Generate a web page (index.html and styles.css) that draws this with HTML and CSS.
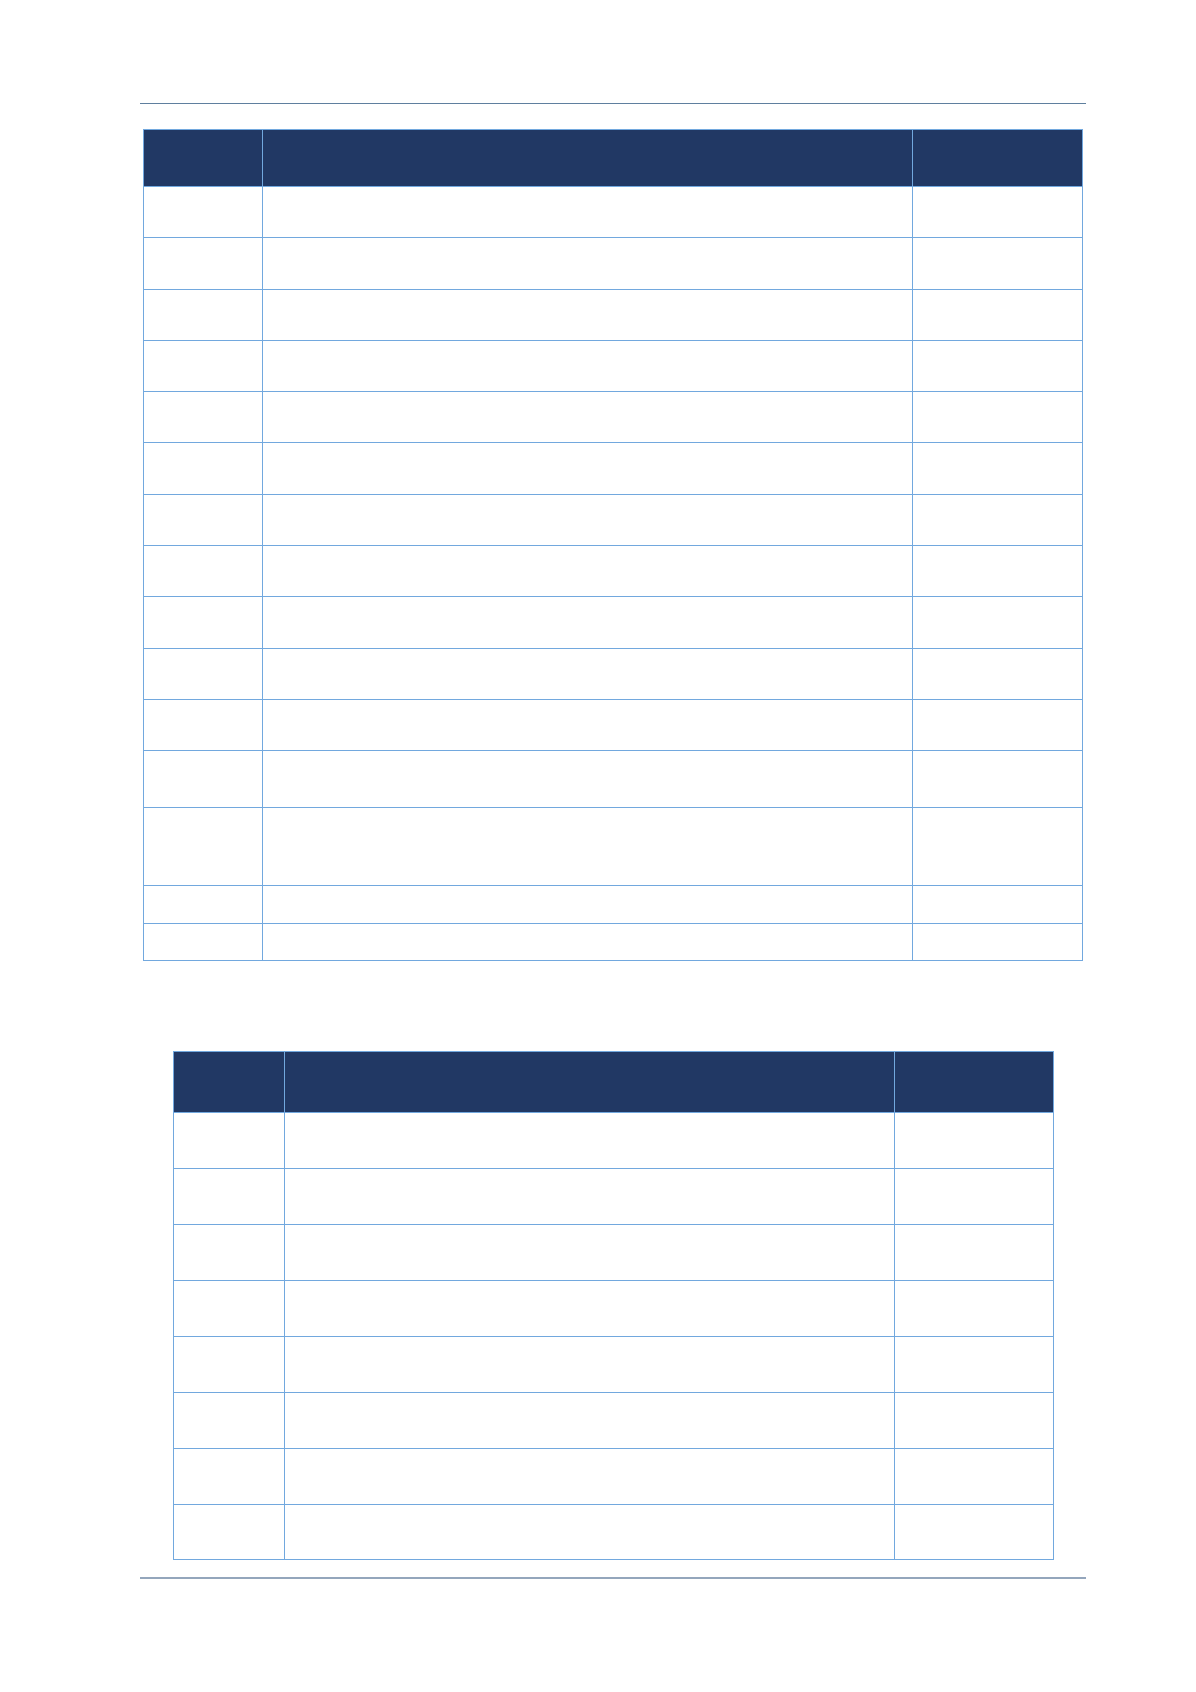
FILE: index.html
```html
<!DOCTYPE html>
<html lang="en">
<head>
<meta charset="utf-8">
<title>Tables</title>
<link rel="stylesheet" href="styles.css">
</head>
<body>
<div class="page">
  <div class="rule-top"></div>
  <table class="grid grid-one">
    <colgroup><col class="c1"><col class="c2"><col class="c3"></colgroup>
    <thead><tr class="h"><th></th><th></th><th></th></tr></thead>
    <tbody>
      <tr class="r"><td></td><td></td><td></td></tr>
      <tr class="r"><td></td><td></td><td></td></tr>
      <tr class="r"><td></td><td></td><td></td></tr>
      <tr class="r"><td></td><td></td><td></td></tr>
      <tr class="r"><td></td><td></td><td></td></tr>
      <tr class="r"><td></td><td></td><td></td></tr>
      <tr class="r"><td></td><td></td><td></td></tr>
      <tr class="r"><td></td><td></td><td></td></tr>
      <tr class="r"><td></td><td></td><td></td></tr>
      <tr class="r"><td></td><td></td><td></td></tr>
      <tr class="r"><td></td><td></td><td></td></tr>
      <tr class="r12"><td></td><td></td><td></td></tr>
      <tr class="r13"><td></td><td></td><td></td></tr>
      <tr class="r14"><td></td><td></td><td></td></tr>
      <tr class="r14"><td></td><td></td><td></td></tr>
    </tbody>
  </table>
  <table class="grid grid-two">
    <colgroup><col class="d1"><col class="d2"><col class="d3"></colgroup>
    <thead><tr class="h2"><th></th><th></th><th></th></tr></thead>
    <tbody>
      <tr class="s"><td></td><td></td><td></td></tr>
      <tr class="s"><td></td><td></td><td></td></tr>
      <tr class="s"><td></td><td></td><td></td></tr>
      <tr class="s"><td></td><td></td><td></td></tr>
      <tr class="s"><td></td><td></td><td></td></tr>
      <tr class="s"><td></td><td></td><td></td></tr>
      <tr class="s"><td></td><td></td><td></td></tr>
      <tr class="s"><td></td><td></td><td></td></tr>
    </tbody>
  </table>
  <div class="rule-bottom"></div>
</div>
</body>
</html>
```

FILE: styles.css
```css
html, body {
  margin: 0;
  padding: 0;
  background: #ffffff;
  font-family: "Liberation Sans", Arial, sans-serif;
}

.page {
  width: 946px;
  margin-left: 140px;
  padding-top: 103px;
}

.rule-top {
  height: 0;
  border-top: 1px solid #5f7f9e;
}

.rule-bottom {
  height: 0;
  border-top: 2px solid #94a6bc;
  margin-top: 17px;
}

.grid {
  border-collapse: collapse;
  table-layout: fixed;
  margin-left: auto;
  margin-right: auto;
}

.grid th,
.grid td {
  padding: 0;
  border: 1px solid #72a8de;
}

.grid th {
  background: #213864;
}

.grid-one {
  width: 939px;
  margin-top: 25px;
}

.grid-one .c1 { width: 119px; }
.grid-one .c2 { width: 650px; }
.grid-one .c3 { width: 170px; }

.grid-one .h { height: 57px; }
.grid-one .r { height: 51.3px; }
.grid-one .r12 { height: 57px; }
.grid-one .r13 { height: 78px; }
.grid-one .r14 { height: 37.5px; }

.grid-two {
  width: 880px;
  margin-top: 90px;
}

.grid-two .d1 { width: 111px; }
.grid-two .d2 { width: 610px; }
.grid-two .d3 { width: 159px; }

.grid-two .h2 { height: 61px; }
.grid-two .s { height: 55.9px; }
```
